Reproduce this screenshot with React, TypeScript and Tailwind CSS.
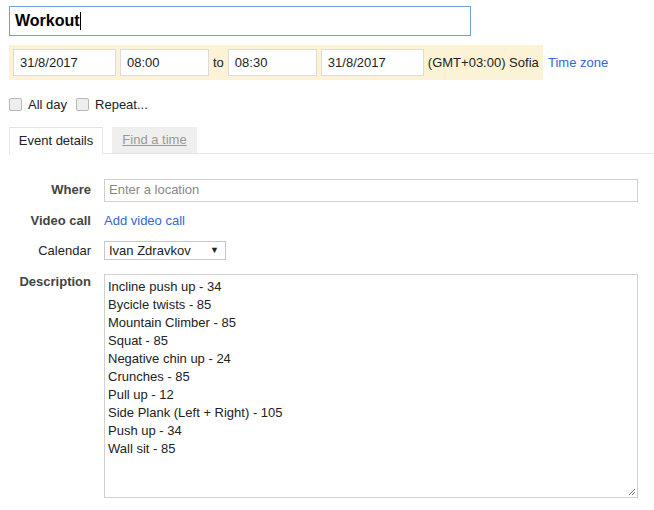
const exercises = [
  'Incline push up - 34',
  'Bycicle twists - 85',
  'Mountain Climber - 85',
  'Squat - 85',
  'Negative chin up - 24',
  'Crunches - 85',
  'Pull up - 12',
  'Side Plank (Left + Right) - 105',
  'Push up - 34',
  'Wall sit - 85',
]

function Box({ value, w }: { value: string; w: string }) {
  return (
    <div className={`${w} h-[27px] bg-white border border-[#dcdcdc] flex items-center pl-[6px] text-[13px] text-[#222]`}>
      {value}
    </div>
  )
}

function Check({ label }: { label: string }) {
  return (
    <span className="flex items-center gap-[6px]">
      <span className="w-[13px] h-[13px] rounded-[2px] border border-[#b8b8b8] bg-[#eeeeee]" />
      <span>{label}</span>
    </span>
  )
}

export default function App() {
  return (
    <div className="w-[654px] h-[510px] bg-white pl-[9px] pt-[6px] font-['Liberation_Sans',Arial,sans-serif] text-[13px] text-[#222] overflow-hidden">
      {/* Title */}
      <div className="w-[462px] h-[30px] border border-[#6f9fdc] flex items-center pl-[5px] text-[16px] font-bold text-black">
        Workout<span className="w-px h-[18px] bg-black" />
      </div>

      {/* Date / time strip */}
      <div className="mt-[9px] flex items-center">
        <div className="w-[534px] h-[35px] bg-[#fcf3d6] flex items-center pl-[4px]">
          <Box value="31/8/2017" w="w-[103px]" />
          <div className="w-[4px]" />
          <Box value="08:00" w="w-[89px]" />
          <span className="px-[4px]">to</span>
          <Box value="08:30" w="w-[89px]" />
          <div className="w-[4px]" />
          <Box value="31/8/2017" w="w-[103px]" />
          <span className="ml-[4px]">(GMT+03:00) Sofia</span>
        </div>
        <a className="ml-[5px] text-[#3367d6]">Time zone</a>
      </div>

      {/* Options */}
      <div className="mt-[15px] flex items-center gap-[9px]">
        <Check label="All day" />
        <Check label="Repeat..." />
      </div>

      {/* Tabs */}
      <div className="mt-[12px] flex items-end border-b border-[#e4e4e4] w-[645px] h-[27px]">
        <div className="w-[94px] h-[27px] border border-b-0 border-[#e4e4e4] bg-white flex items-center justify-center -mb-px">
          Event details
        </div>
        <div className="ml-[9px] w-[85px] h-[26px] bg-[#efefef] flex items-center justify-center text-[#999] underline">
          Find a time
        </div>
      </div>

      {/* Form */}
      <div className="mt-[25px] grid grid-cols-[82px_534px] gap-x-[13px] items-center">
        <span className="text-right font-bold text-[#444]">Where</span>
        <div className="h-[23px] border border-[#d0d0d0] flex items-center pl-[4px] text-[#888]">
          Enter a location
        </div>

        <span className="mt-[9px] text-right font-bold text-[#444]">Video call</span>
        <a className="mt-[9px] text-[#3367d6]">Add video call</a>

        <span className="mt-[11px] text-right text-[#222]">Calendar</span>
        <div className="mt-[11px] w-[122px] h-[19px] border border-[#c8c8c8] flex items-center justify-between pl-[4px] pr-[6px]">
          <span>Ivan Zdravkov</span>
          <span className="text-[9px]">▼</span>
        </div>

        <span className="mt-[13px] self-start -translate-y-[2px] text-right font-bold text-[#444]">Description</span>
        <div className="mt-[13px] relative h-[224px] border border-[#d0d0d0] pl-[3px] pt-[3px] leading-[18px]">
          {exercises.map((e) => (
            <div key={e}>{e}</div>
          ))}
          <svg className="absolute right-[1px] bottom-[1px]" width="9" height="9" viewBox="0 0 9 9">
            <path d="M8 2 L2 8 M8 5 L5 8" stroke="#777" strokeWidth="1" />
          </svg>
        </div>
      </div>
    </div>
  )
}
